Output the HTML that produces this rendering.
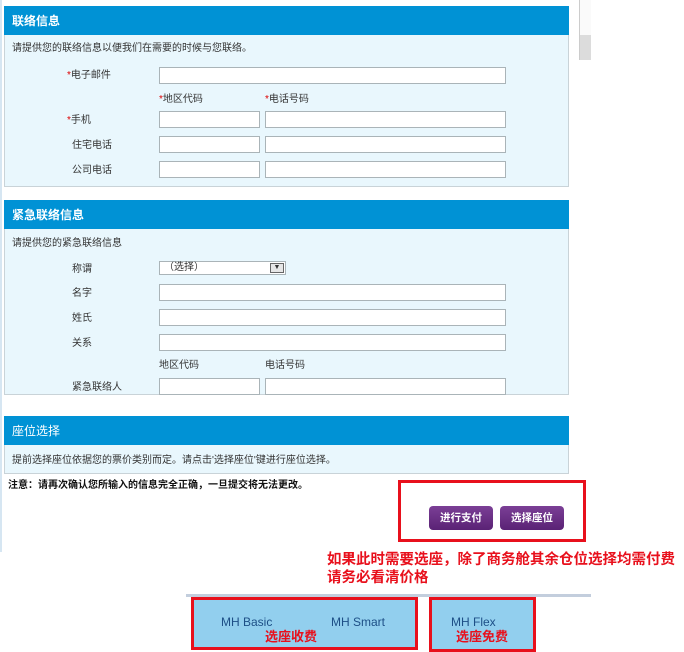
<!DOCTYPE html>
<html><head><meta charset="utf-8"><style>
*{margin:0;padding:0;box-sizing:border-box}
body{width:684px;height:652px;background:#fff;position:relative;overflow:hidden;font-family:"Liberation Sans","Noto Sans CJK SC",sans-serif;font-size:10px;color:#333;line-height:1.2}
.a{position:absolute}
.hd{position:absolute;left:4px;width:565px;height:29px;background:#0092d5;color:#fff;font-size:12px;padding:8px 0 0 8px}
.bd{position:absolute;left:4px;width:565px;background:#e9f7fd;border:1px solid #c9d3d8;border-top:none}
.in{position:absolute;height:17px;background:#fff;border:1px solid #aab4b8}
.l{position:absolute;font-size:10px;color:#333}
.r{color:#d00}
.btn{position:absolute;top:506px;height:24px;background:linear-gradient(#7b3f96,#5a2275);color:#fff;border-radius:4px;font-size:10.5px;font-weight:bold;text-align:center;line-height:24px}
.rb{position:absolute;border:3px solid #e8101c}
</style></head><body>
<div class="a" style="left:0;top:0;width:2px;height:552px;background:#d6e6f2"></div>
<div class="a" style="left:579px;top:0;width:12px;height:60px;background:#fafafa;border-left:1px solid #ccc"></div>
<div class="a" style="left:580px;top:35px;width:11px;height:25px;background:#dcdcdc"></div>

<div class="hd" style="top:6px;font-weight:bold">联络信息</div>
<div class="bd" style="top:35px;height:152px"></div>
<div class="l" style="left:12px;top:43px">请提供您的联络信息以便我们在需要的时候与您联络。</div>
<div class="l" style="left:67px;top:70px"><span class="r">*</span>电子邮件</div>
<div class="in" style="left:159px;top:67px;width:347px"></div>
<div class="l" style="left:159px;top:94px"><span class="r">*</span>地区代码</div>
<div class="l" style="left:265px;top:94px"><span class="r">*</span>电话号码</div>
<div class="l" style="left:67px;top:115px"><span class="r">*</span>手机</div>
<div class="in" style="left:159px;top:111px;width:101px"></div><div class="in" style="left:265px;top:111px;width:241px"></div>
<div class="l" style="left:72px;top:140px">住宅电话</div>
<div class="in" style="left:159px;top:136px;width:101px"></div><div class="in" style="left:265px;top:136px;width:241px"></div>
<div class="l" style="left:72px;top:165px">公司电话</div>
<div class="in" style="left:159px;top:161px;width:101px"></div><div class="in" style="left:265px;top:161px;width:241px"></div>

<div class="hd" style="top:200px;font-weight:bold">紧急联络信息</div>
<div class="bd" style="top:229px;height:166px"></div>
<div class="l" style="left:12px;top:238px">请提供您的紧急联络信息</div>
<div class="l" style="left:72px;top:264px">称谓</div>
<div class="in" style="left:159px;top:261px;width:127px;height:14px;font-size:10px;padding-left:4px;line-height:12px">（选择）<span style="position:absolute;right:1px;top:1px;width:14px;height:10px;background:#e6e6e6;border:1px solid #666;font-size:7px;line-height:8px;text-align:center">▼</span></div>
<div class="l" style="left:72px;top:288px">名字</div><div class="in" style="left:159px;top:284px;width:347px"></div>
<div class="l" style="left:72px;top:313px">姓氏</div><div class="in" style="left:159px;top:309px;width:347px"></div>
<div class="l" style="left:72px;top:338px">关系</div><div class="in" style="left:159px;top:334px;width:347px"></div>
<div class="l" style="left:159px;top:360px">地区代码</div><div class="l" style="left:265px;top:360px">电话号码</div>
<div class="l" style="left:72px;top:382px">紧急联络人</div>
<div class="in" style="left:159px;top:378px;width:101px"></div><div class="in" style="left:265px;top:378px;width:241px"></div>

<div class="hd" style="top:416px">座位选择</div>
<div class="bd" style="top:445px;height:29px"></div>
<div class="l" style="left:12px;top:455px">提前选择座位依据您的票价类别而定。请点击'选择座位'键进行座位选择。</div>
<div class="l" style="left:8px;top:480px;font-weight:bold;color:#111">注意：请再次确认您所输入的信息完全正确，一旦提交将无法更改。</div>

<div class="btn" style="left:429px;width:64px">进行支付</div>
<div class="btn" style="left:500px;width:64px">选择座位</div>
<div class="rb" style="left:398px;top:480px;width:188px;height:62px"></div>

<div class="a" style="left:327px;top:551px;color:#e8101c;font-size:14.5px;font-weight:bold;line-height:18px;white-space:nowrap">如果此时需要选座，除了商务舱其余仓位选择均需付费<br>请务必看清价格</div>

<div class="a" style="left:186px;top:594px;width:405px;height:3px;background:#c3cedd"></div>
<div class="a" style="left:191px;top:597px;width:227px;height:53px;background:#92cfee"></div>
<div class="a" style="left:429px;top:597px;width:107px;height:53px;background:#92cfee"></div>
<div class="a" style="left:221px;top:615px;color:#1d4f86;font-size:12px">MH Basic</div>
<div class="a" style="left:331px;top:615px;color:#1d4f86;font-size:12px">MH Smart</div>
<div class="a" style="left:451px;top:615px;color:#1d4f86;font-size:12px">MH Flex</div>
<div class="a" style="left:265px;top:629px;color:#e8101c;font-size:13px;font-weight:bold">选座收费</div>
<div class="a" style="left:456px;top:629px;color:#e8101c;font-size:13px;font-weight:bold">选座免费</div>
<div class="rb" style="left:191px;top:597px;width:227px;height:53px"></div>
<div class="rb" style="left:429px;top:597px;width:107px;height:55px"></div>
</body></html>
